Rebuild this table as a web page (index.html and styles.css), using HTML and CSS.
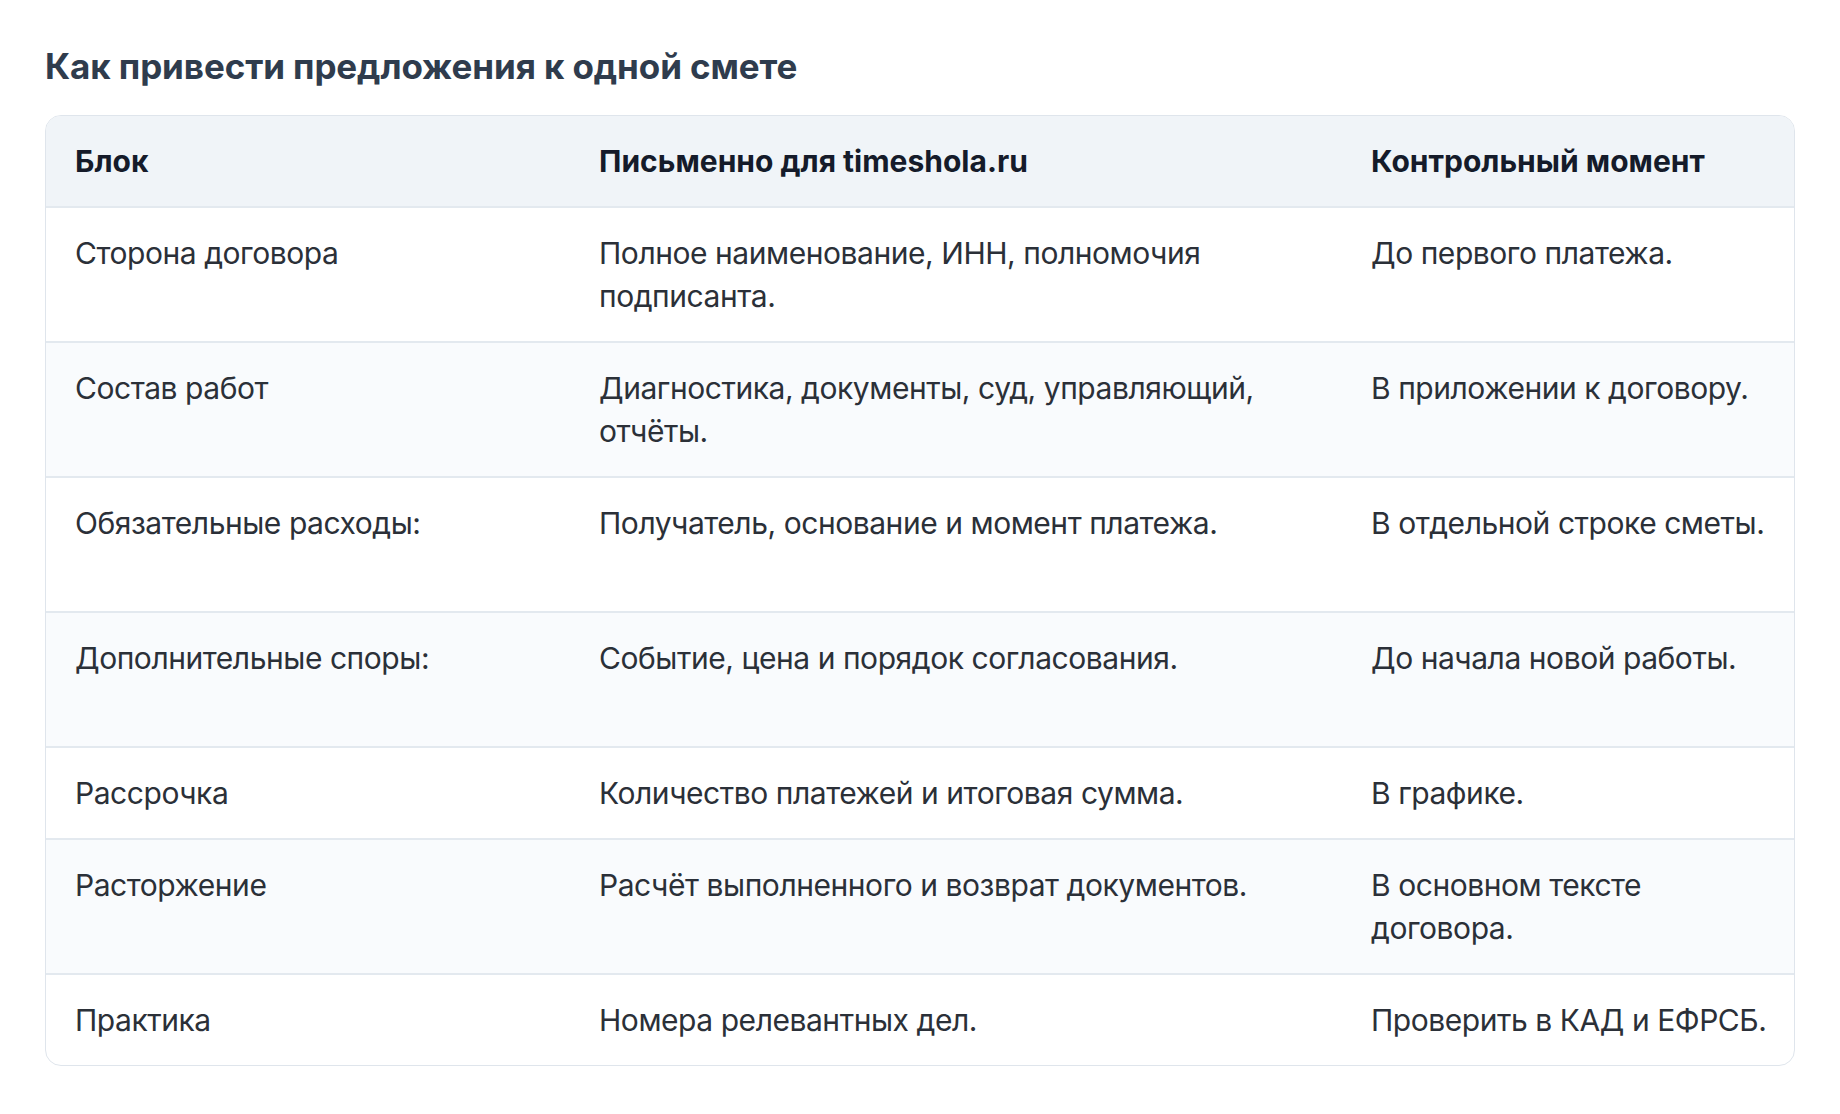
FILE: index.html
```html
<!DOCTYPE html>
<html lang="ru">
<head>
<meta charset="utf-8">
<title>Как привести предложения к одной смете</title>
<link rel="stylesheet" href="styles.css">
</head>
<body>
<main class="page">
  <h2 class="title">Как привести предложения к одной смете</h2>
  <div class="table-wrap">
    <table class="grid">
      <colgroup>
        <col class="c1"><col class="c2"><col class="c3">
      </colgroup>
      <thead>
        <tr><th>Блок</th><th>Письменно для timeshola.ru</th><th class="last">Контрольный момент</th></tr>
      </thead>
      <tbody>
        <tr><td>Сторона договора</td><td>Полное наименование, ИНН, полномочия подписанта.</td><td class="last">До первого платежа.</td></tr>
        <tr><td>Состав работ</td><td>Диагностика, документы, суд, управляющий, отчёты.</td><td class="last">В приложении к договору.</td></tr>
        <tr class="tall"><td>Обязательные расходы:</td><td>Получатель, основание и момент платежа.</td><td class="last">В отдельной строке сметы.</td></tr>
        <tr class="tall"><td>Дополнительные споры:</td><td>Событие, цена и порядок согласования.</td><td class="last">До начала новой работы.</td></tr>
        <tr><td>Рассрочка</td><td>Количество платежей и итоговая сумма.</td><td class="last">В графике.</td></tr>
        <tr><td>Расторжение</td><td>Расчёт выполненного и возврат документов.</td><td class="last">В основном тексте договора.</td></tr>
        <tr><td>Практика</td><td>Номера релевантных дел.</td><td class="last">Проверить в КАД и ЕФРСБ.</td></tr>
      </tbody>
    </table>
  </div>
</main>
</body>
</html>
```

FILE: styles.css
```css
* { box-sizing: border-box; }
html, body { margin: 0; padding: 0; background: #ffffff; }
body { font-family: Inter, "Noto Sans", "Liberation Sans", sans-serif; }
.page { padding: 44px 45px 0 45px; }
.title {
  margin: 0 0 27px 0;
  font-size: 35px;
  line-height: 44px;
  font-weight: 700;
  color: #2f3c4d;
  letter-spacing: -0.1px;
}
.table-wrap {
  width: 1750px;
  border: 1.5px solid #dfe5ec;
  border-radius: 16px;
  overflow: hidden;
}
.grid {
  width: 100%;
  border-collapse: collapse;
  table-layout: fixed;
}
.c1 { width: 524px; }
.c2 { width: 772px; }
.c3 { width: 454px; }
.grid th, .grid td {
  text-align: left;
  vertical-align: top;
  padding: 23.5px 16px 23.5px 29px;
  font-size: 30px;
  line-height: 43px;
}
.grid .last { padding-right: 22px; }
.grid th {
  background: #f0f4f8;
  color: #151b2a;
  font-weight: 700;
  border-bottom: 2px solid #e3e9ef;
}
.grid td {
  color: #2b3038;
  font-weight: 400;
  letter-spacing: -0.45px;
}
.grid tbody tr { border-top: 2px solid #e3e9ef; }
.grid tbody tr:first-child { border-top: none; }
.grid tbody tr:nth-child(even) td { background: #f9fbfd; }
.grid tr.tall td { height: 135px; }
```
